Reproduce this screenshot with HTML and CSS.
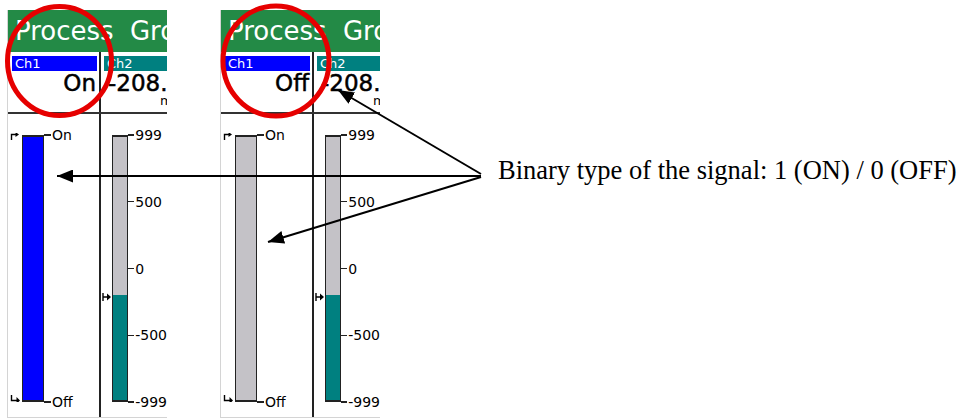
FILE: index.html
```html
<!doctype html>
<html>
	<head>
		<title>Binary signal display</title>
		<meta charset="utf-8" />
		<link rel="stylesheet" href="styles.css">
	</head>
	<body>
		<div class="page">
			<!-- screen with channel 1 = On -->
			<div class="panel">
				<div class="title">Process Group 1</div>
				<div class="head">
					<div class="cell c1">
						<div class="tag blue">Ch1</div>
						<div class="val right">On</div>
					</div>
					<div class="cell c2">
						<div class="tag teal">Ch2</div>
						<div class="val">-208.6</div>
						<div class="unit">mV</div>
					</div>
				</div>
				<div class="bars">
					<div class="col c1">
						<div class="marks">
							<svg width="9" height="7" viewBox="0 0 9 7"><path d="M1.5 7V1.5H6" fill="none" stroke="#000" stroke-width="1.4"/><path d="M5.5 -1 9 1.5 5.5 4z"/></svg>
							<svg width="10" height="7" viewBox="0 0 10 7"><path d="M1.5 0V5.5H7" fill="none" stroke="#000" stroke-width="1.4"/><path d="M6.5 2 10 5.5 6.5 9z"/></svg>
						</div>
						<div class="bar"><div class="fill blue" style="height:100%"></div></div>
						<div class="scale short"><span>On</span><span>Off</span></div>
					</div>
					<div class="col c2">
						<div class="marks level">
							<div class="lvl" style="height:40%"><svg width="10" height="8" viewBox="0 0 10 8"><path d="M1 0V8M1 4H6" fill="none" stroke="#000" stroke-width="1.4"/><path d="M5 0.5 9 4 5 7.5z"/></svg></div>
						</div>
						<div class="bar"><div class="fill teal" style="height:40%"></div></div>
						<div class="scale"><span>999</span><span>500</span><span>0</span><span>-500</span><span>-999</span></div>
					</div>
				</div>
			</div>

			<!-- screen with channel 1 = Off -->
			<div class="panel">
				<div class="title">Process Group 1</div>
				<div class="head">
					<div class="cell c1">
						<div class="tag blue">Ch1</div>
						<div class="val right">Off</div>
					</div>
					<div class="cell c2">
						<div class="tag teal">Ch2</div>
						<div class="val">-208.6</div>
						<div class="unit">mV</div>
					</div>
				</div>
				<div class="bars">
					<div class="col c1">
						<div class="marks">
							<svg width="9" height="7" viewBox="0 0 9 7"><path d="M1.5 7V1.5H6" fill="none" stroke="#000" stroke-width="1.4"/><path d="M5.5 -1 9 1.5 5.5 4z"/></svg>
							<svg width="10" height="7" viewBox="0 0 10 7"><path d="M1.5 0V5.5H7" fill="none" stroke="#000" stroke-width="1.4"/><path d="M6.5 2 10 5.5 6.5 9z"/></svg>
						</div>
						<div class="bar"><div class="fill" style="height:0%"></div></div>
						<div class="scale short"><span>On</span><span>Off</span></div>
					</div>
					<div class="col c2">
						<div class="marks level">
							<div class="lvl" style="height:40%"><svg width="10" height="8" viewBox="0 0 10 8"><path d="M1 0V8M1 4H6" fill="none" stroke="#000" stroke-width="1.4"/><path d="M5 0.5 9 4 5 7.5z"/></svg></div>
						</div>
						<div class="bar"><div class="fill teal" style="height:40%"></div></div>
						<div class="scale"><span>999</span><span>500</span><span>0</span><span>-500</span><span>-999</span></div>
					</div>
				</div>
			</div>

			<p class="caption">Binary type of the signal: 1 (ON) / 0 (OFF)</p>
		</div>

		<!-- red circles and arrows drawn over the screens -->
		<svg class="notes" width="963" height="419" viewBox="0 0 963 419">
			<defs>
				<marker id="ah" markerWidth="16" markerHeight="13" refX="16" refY="6.5" orient="auto" markerUnits="userSpaceOnUse">
					<path d="M0 0 16 6.5 0 13z"/>
				</marker>
			</defs>
			<ellipse cx="59.5" cy="61" rx="52" ry="54.5" fill="none" stroke="#e60000" stroke-width="5"/>
			<ellipse cx="276" cy="61" rx="53" ry="55" fill="none" stroke="#e60000" stroke-width="5"/>
			<g stroke="#000" stroke-width="2" marker-end="url(#ah)">
				<line x1="481" y1="174" x2="338" y2="90"/>
				<line x1="481" y1="176" x2="57" y2="176"/>
				<line x1="481" y1="177" x2="268" y2="242"/>
			</g>
		</svg>
	</body>
</html>
```

FILE: styles.css
```css
*{
	margin:0;
	padding:0;
	box-sizing:border-box;
}

body{
	width:963px;
	height:419px;
	background:#fff;
	position:relative;
	overflow:hidden;
	font-family:"DejaVu Sans", Verdana, sans-serif;
}

.page{
	display:flex;
	align-items:flex-start;
	gap:53px;
	padding:10px 0 0 7px;
}

/* one recorder screen */
.panel{
	width:160px;
	height:408px;
	border-left:1px solid #d4d4d4;
	border-bottom:1px solid #d4d4d4;
	overflow:hidden;
	display:flex;
	flex-direction:column;
}

.title{
	height:42px;
	line-height:43px;
	overflow:hidden;
	background:#238a46;
	color:#fff;
	font-size:26px;
	word-spacing:8px;
	padding-left:8px;
	white-space:nowrap;
	margin-left:-1px;
}

.head{
	display:flex;
	height:62px;
	border-bottom:2px solid #333;
}

.cell, .col{
	flex:none;
}
.c1{
	width:93px;
	border-right:2px solid #222;
}
.c2{
	flex:1;
	min-width:0;
}

.tag{
	height:15px;
	line-height:15px;
	font-size:13px;
	color:#fff;
	padding-left:3px;
	white-space:nowrap;
	overflow:hidden;
}
.c1 .tag{
	margin:4px 2px 0 4px;
}
.c2 .tag{
	margin:4px 0 0 3px;
}

.blue{ background:#0000ff; }
.teal{ background:#008080; }

.val{
	font-size:23px;
	line-height:21px;
	-webkit-text-stroke:0.5px #000;
	margin-top:2px;
	padding-left:7px;
	white-space:nowrap;
}
.val.right{
	text-align:right;
	padding:0 3px 0 0;
}
.unit{
	font-size:13px;
	line-height:14px;
	padding-left:59px;
	white-space:nowrap;
}

/* bar graphs */
.bars{
	flex:1;
	display:flex;
}
.col{
	display:flex;
	padding-top:21px;
	align-items:flex-start;
}

.marks{
	width:11px;
	height:267px;
	margin-left:2px;
	display:flex;
	flex-direction:column;
	justify-content:space-between;
}
.marks svg{
	display:block;
}
.marks svg:first-child{
	margin-top:-2px;
}
.marks.level{
	margin-left:1px;
	justify-content:flex-end;
	width:13px;
}
.lvl svg{
	margin-top:-4px;
}

.bar{
	width:22px;
	height:267px;
	margin-left:1px;
	border:1px solid #222;
	border-top-width:2px;
	border-bottom-width:2px;
	background:#c4c2c7;
	display:flex;
	flex-direction:column;
	justify-content:flex-end;
}
.c2 .bar{
	margin-left:0;
}

.scale{
	height:281px;
	margin-top:-7px;
	display:flex;
	flex-direction:column;
	justify-content:space-between;
	font-size:14px;
	line-height:14px;
	white-space:nowrap;
}
.scale span{
	display:flex;
	align-items:center;
}
.scale span::before{
	content:"";
	width:6px;
	height:1px;
	background:#222;
	margin-right:1px;
}
.scale span:first-child::before,
.scale span:last-child::before{
	height:2px;
}
.scale.short span::before{
	width:7px;
}

.caption{
	font-family:"Liberation Serif", "Times New Roman", serif;
	font-size:26.5px;
	line-height:26px;
	margin:147px 0 0 65px;
	white-space:nowrap;
}

.notes{
	position:absolute;
	left:0;
	top:0;
	pointer-events:none;
}
```
